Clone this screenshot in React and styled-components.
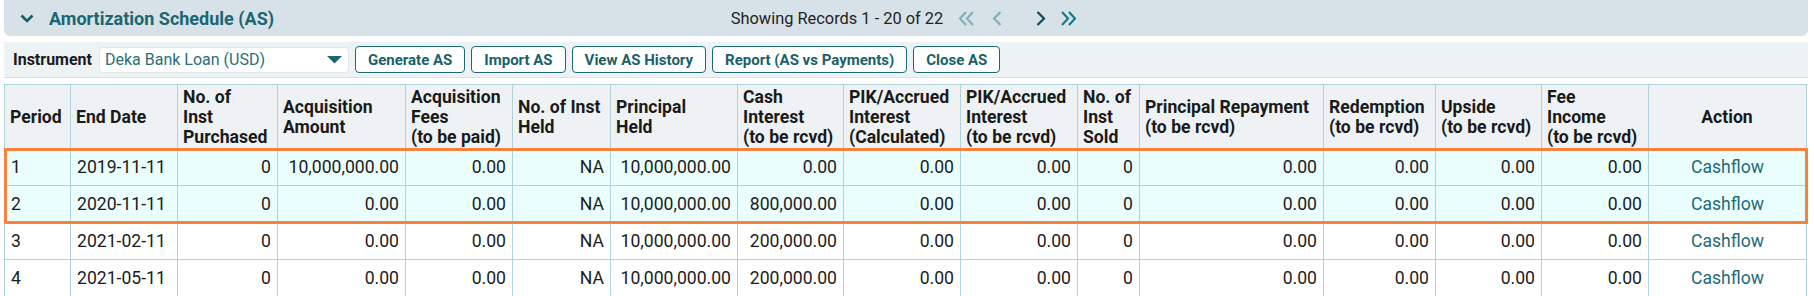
import React from "react";
import styled, { createGlobalStyle } from "styled-components";

const GlobalStyle = createGlobalStyle`
  html, body {
    margin: 0;
    padding: 0;
    background: #ffffff;
  }
  body {
    font-family: Roboto, "Liberation Sans", Arial, sans-serif;
    color: #1c1c1c;
  }
`;

const Page = styled.div`
  padding: 0 6px 0 4px;
  display: flex;
  flex-direction: column;
  gap: 6px;
`;

const SectionBar = styled.div`
  height: 36px;
  background: #d7e2e8;
  border-radius: 0 0 6px 6px;
  display: grid;
  grid-template-columns: 1fr auto 1fr;
  align-items: center;
`;

const TitleWrap = styled.div`
  display: flex;
  align-items: center;
  gap: 15px;
  padding-left: 16px;
`;

const Title = styled.span`
  font-size: 18px;
  font-weight: 700;
  color: #1b6670;
`;

const Pager = styled.div`
  display: flex;
  align-items: center;
  font-size: 16.4px;
  color: #222;
  padding-left: 4px;
  padding-right: 8px;
`;

const PagerText = styled.span`
  margin-right: 14px;
`;

const PageButton = styled.span`
  display: inline-flex;
  align-items: center;
  justify-content: center;
  width: ${({ $w }) => $w}px;
  margin-left: ${({ $gap }) => $gap || 0}px;
  color: ${({ $disabled, $dark }) =>
    $disabled ? "#80b0b7" : $dark ? "#0e4a57" : "#117a80"};
`;

const Toolbar = styled.div`
  height: 35px;
  background: #edf2f5;
  border-bottom: 1px solid #d9dfe2;
  display: flex;
  align-items: center;
  padding-left: 9px;
  gap: 6px;
`;

const Label = styled.span`
  font-size: 16px;
  font-weight: 700;
  color: #1a1a1a;
  margin-right: 1px;
`;

const Select = styled.div`
  width: 250px;
  height: 26px;
  box-sizing: border-box;
  background: #ffffff;
  border: 1px solid #e1e7ea;
  border-radius: 4px;
  display: flex;
  align-items: center;
  justify-content: space-between;
  padding: 0 6px 0 5px;
  font-size: 16px;
  color: #2a6f78;
`;

const Button = styled.button`
  height: 27px;
  box-sizing: border-box;
  padding: 0 12px;
  background: #ffffff;
  border: 1px solid #1b6a72;
  border-radius: 4px;
  font-family: inherit;
  font-size: 15px;
  font-weight: 700;
  color: #1b5f68;
  cursor: pointer;
`;

const Table = styled.table`
  width: 1802px;
  table-layout: fixed;
  border-collapse: collapse;
  font-size: 17.6px;
  border: 1px solid #aed4d9;
`;

const HeadRow = styled.tr`
  height: 64px;
  background: #eef2f5;
`;

const Th = styled.th`
  border: 1px solid #aed4d9;
  padding: 0 6px 0 5px;
  font-weight: 700;
  line-height: 20px;
  text-align: ${({ $center }) => ($center ? "center" : "left")};
  vertical-align: middle;
  white-space: nowrap;
  color: #1a1a1a;
`;

const Highlight = styled.tbody`
  outline: 3px solid #f7813f;
  outline-offset: -2px;
`;

const Row = styled.tr`
  height: 37px;
  background: ${({ $hl }) => ($hl ? "#eafefe" : "#ffffff")};
`;

const Td = styled.td`
  border: 1px solid #aed4d9;
  padding: 0 6px 0 6px;
  text-align: ${({ $align }) => $align};
  color: #1c1c1c;
  white-space: nowrap;
`;

const Link = styled.a`
  color: #1e6b76;
  text-decoration: none;
  cursor: pointer;
`;

const Chevron = () => (
  <svg width="14" height="9" viewBox="0 0 14 9">
    <path d="M1.5 1.5 L7 7 L12.5 1.5" fill="none" stroke="#1a5a66" strokeWidth="2.6" />
  </svg>
);

const Single = ({ dir }) => (
  <svg width="10" height="15" viewBox="0 0 10 15">
    <path
      d={dir === "left" ? "M8.5 1 L2 7.5 L8.5 14" : "M1.5 1 L8 7.5 L1.5 14"}
      fill="none"
      stroke="currentColor"
      strokeWidth="2.2"
    />
  </svg>
);

const Double = ({ dir }) => (
  <svg width="17" height="15" viewBox="0 0 17 15">
    <path
      d={
        dir === "left"
          ? "M8 1 L2 7.5 L8 14 M15 1 L9 7.5 L15 14"
          : "M2 1 L8 7.5 L2 14 M9 1 L15 7.5 L9 14"
      }
      fill="none"
      stroke="currentColor"
      strokeWidth="2.1"
    />
  </svg>
);

const Caret = () => (
  <svg width="15" height="8" viewBox="0 0 15 8">
    <polygon points="0,0 15,0 7.5,7.5" fill="#1b6670" />
  </svg>
);

const widths = [66, 107, 100, 128, 107, 98, 127, 106, 117, 117, 62, 184, 112, 106, 107, 158];

const headers = [
  ["Period"],
  ["End Date"],
  ["No. of", "Inst", "Purchased"],
  ["Acquisition", "Amount"],
  ["Acquisition", "Fees", "(to be paid)"],
  ["No. of Inst", "Held"],
  ["Principal", "Held"],
  ["Cash", "Interest", "(to be rcvd)"],
  ["PIK/Accrued", "Interest", "(Calculated)"],
  ["PIK/Accrued", "Interest", "(to be rcvd)"],
  ["No. of", "Inst", "Sold"],
  ["Principal Repayment", "(to be rcvd)"],
  ["Redemption", "(to be rcvd)"],
  ["Upside", "(to be rcvd)"],
  ["Fee", "Income", "(to be rcvd)"],
  ["Action"],
];

const rows = [
  ["1", "2019-11-11", "0", "10,000,000.00", "0.00", "NA", "10,000,000.00", "0.00"],
  ["2", "2020-11-11", "0", "0.00", "0.00", "NA", "10,000,000.00", "800,000.00"],
  ["3", "2021-02-11", "0", "0.00", "0.00", "NA", "10,000,000.00", "200,000.00"],
  ["4", "2021-05-11", "0", "0.00", "0.00", "NA", "10,000,000.00", "200,000.00"],
];

const DataRow = ({ r, hl }) => {
  const cells = [...r, "0.00", "0.00", "0", "0.00", "0.00", "0.00", "0.00"];
  return (
    <Row $hl={hl}>
      {cells.map((c, i) => (
        <Td key={i} $align={i < 2 ? "left" : "right"}>
          {c}
        </Td>
      ))}
      <Td $align="center">
        <Link>Cashflow</Link>
      </Td>
    </Row>
  );
};

const App = () => {
  return (
    <Page>
      <GlobalStyle />
      <SectionBar>
        <TitleWrap>
          <Chevron />
          <Title>Amortization Schedule (AS)</Title>
        </TitleWrap>
        <Pager>
          <PagerText>Showing Records 1 - 20 of 22</PagerText>
          <PageButton $w={18} $disabled>
            <Double dir="left" />
          </PageButton>
          <PageButton $w={12} $gap={16} $disabled>
            <Single dir="left" />
          </PageButton>
          <PageButton $w={12} $gap={32} $dark>
            <Single dir="right" />
          </PageButton>
          <PageButton $w={18} $gap={12}>
            <Double dir="right" />
          </PageButton>
        </Pager>
        <div />
      </SectionBar>

      <Toolbar>
        <Label>Instrument</Label>
        <Select>
          <span>Deka Bank Loan (USD)</span>
          <Caret />
        </Select>
        <Button>Generate AS</Button>
        <Button>Import AS</Button>
        <Button>View AS History</Button>
        <Button>Report (AS vs Payments)</Button>
        <Button>Close AS</Button>
      </Toolbar>

      <Table>
        <colgroup>
          {widths.map((w, i) => (
            <col key={i} style={{ width: w }} />
          ))}
        </colgroup>
        <thead>
          <HeadRow>
            {headers.map((lines, i) => (
              <Th key={i} $center={i === headers.length - 1}>
                {lines.map((l, j) => (
                  <React.Fragment key={j}>
                    {j > 0 && <br />}
                    {l}
                  </React.Fragment>
                ))}
              </Th>
            ))}
          </HeadRow>
        </thead>
        <Highlight>
          <DataRow r={rows[0]} hl />
          <DataRow r={rows[1]} hl />
        </Highlight>
        <tbody>
          {rows.slice(2).map((r, i) => (
            <DataRow key={i} r={r} />
          ))}
        </tbody>
      </Table>
    </Page>
  );
};

export default App;
